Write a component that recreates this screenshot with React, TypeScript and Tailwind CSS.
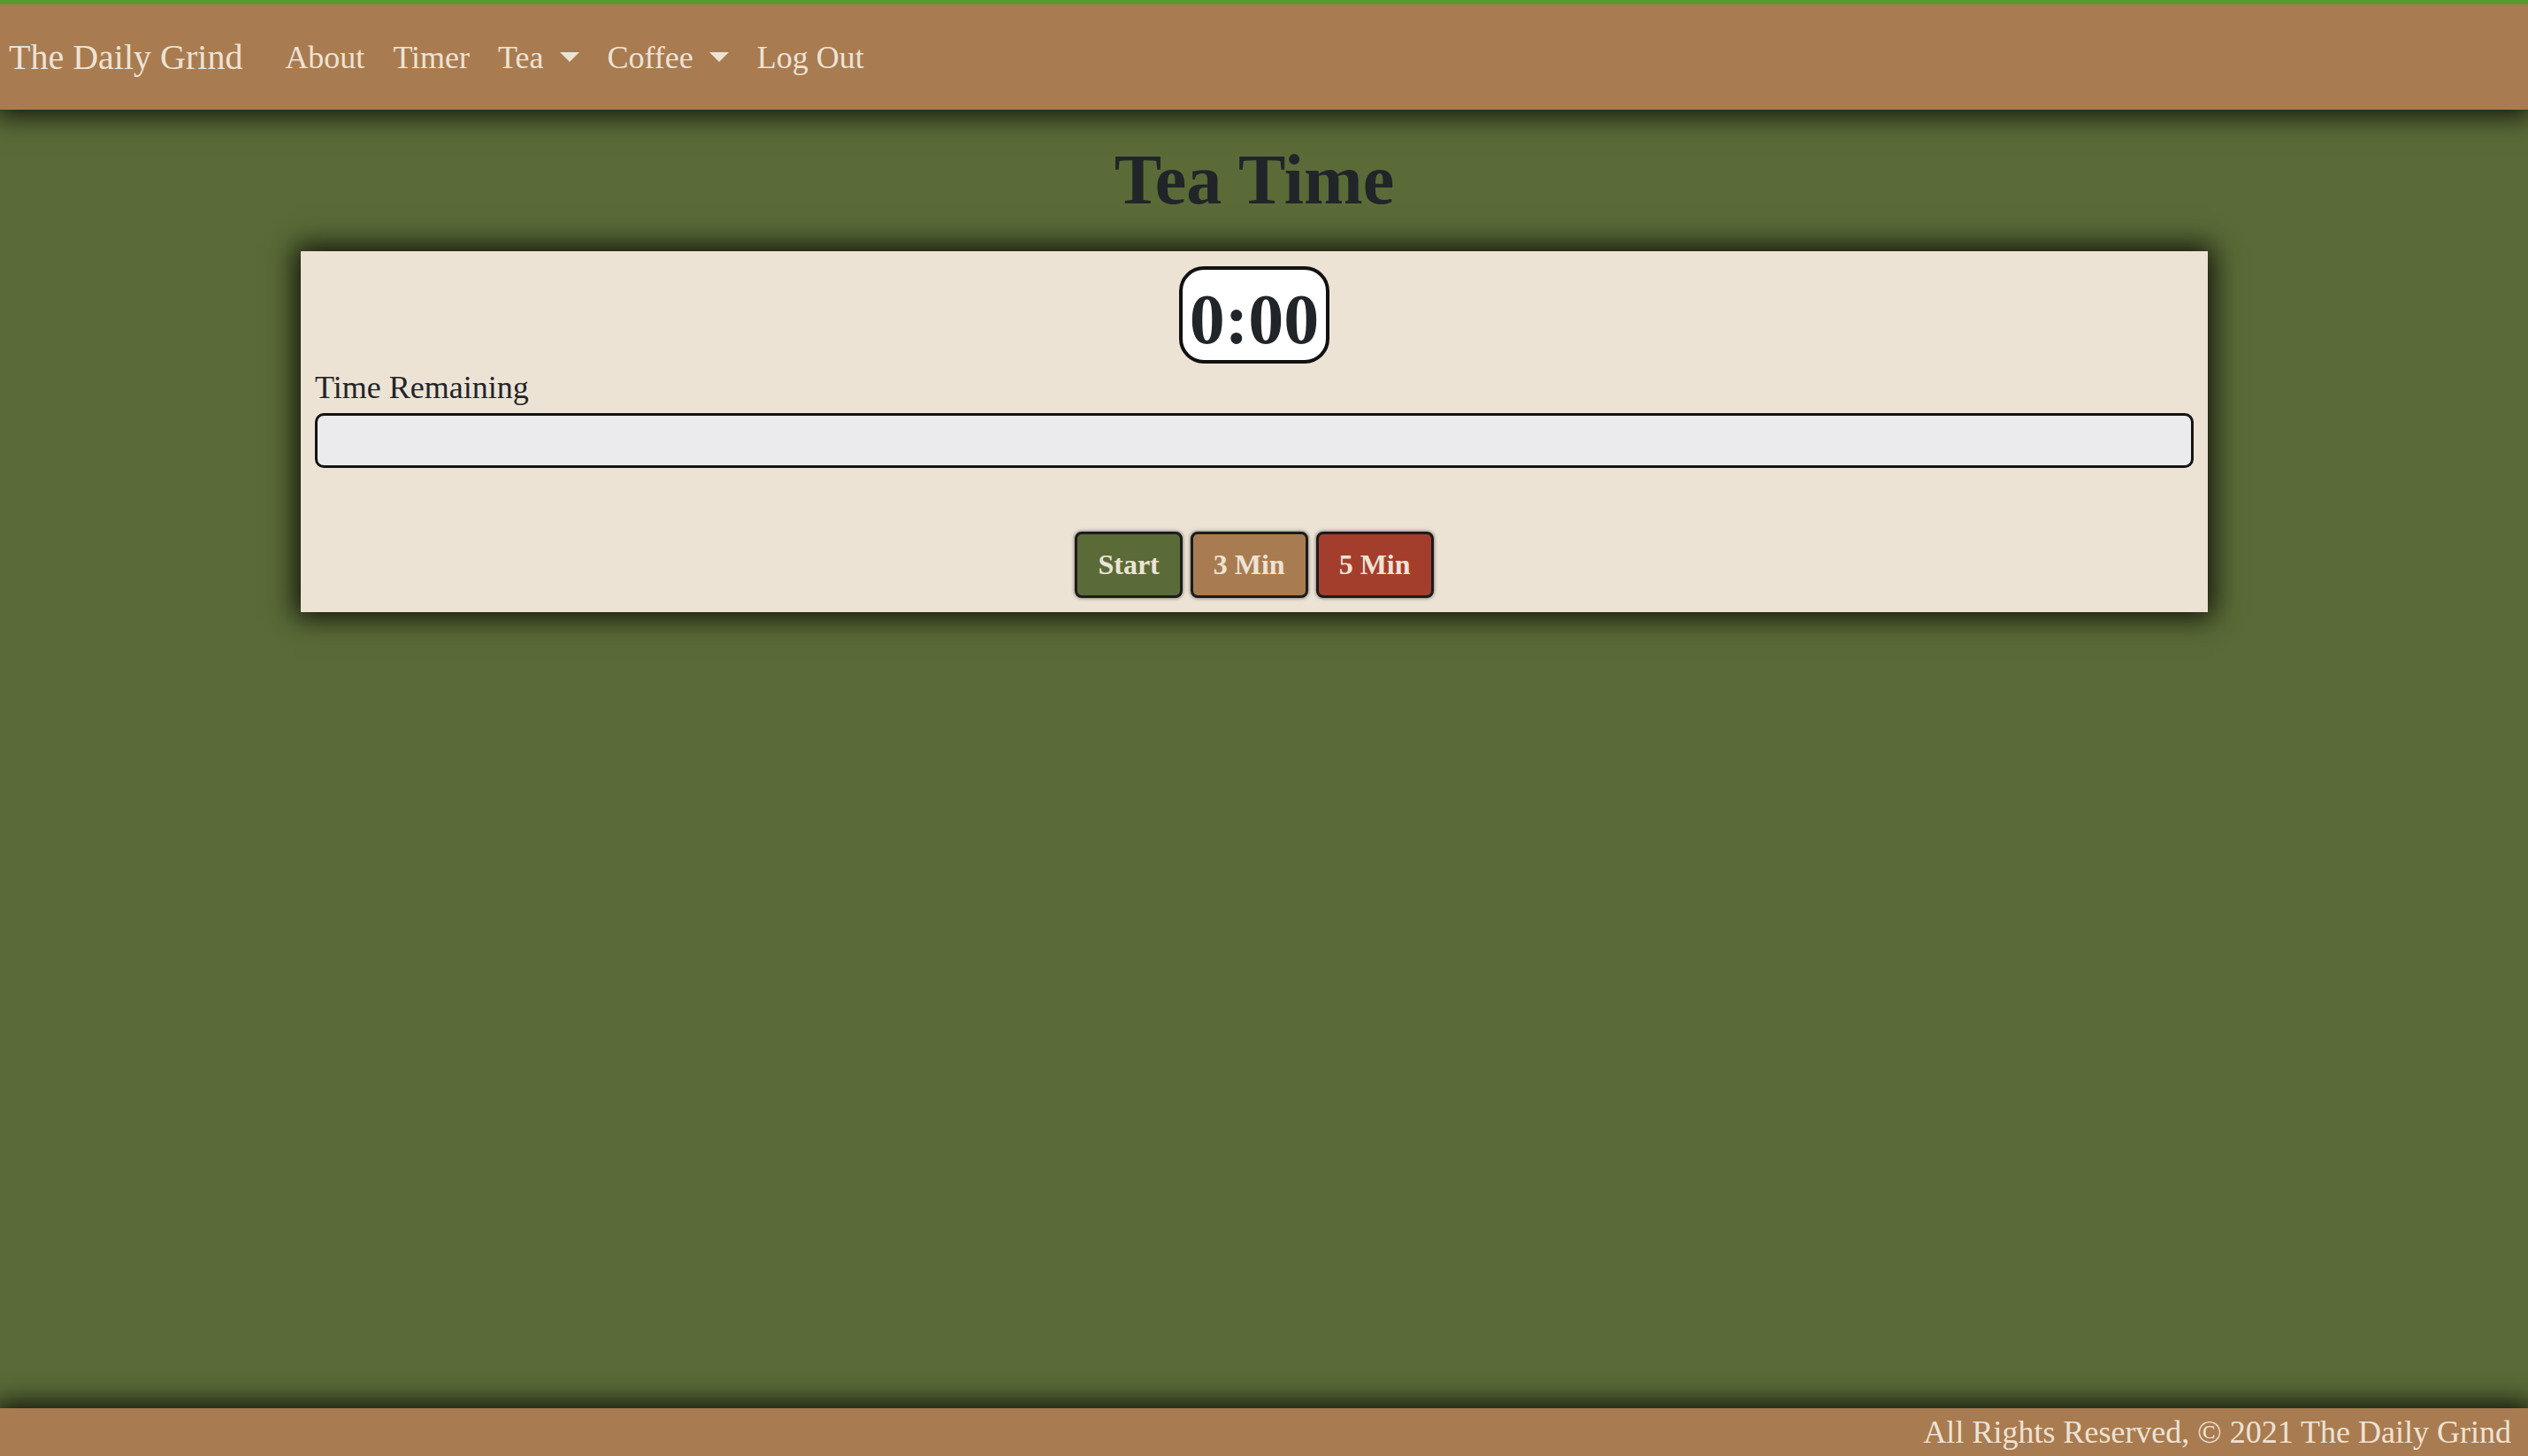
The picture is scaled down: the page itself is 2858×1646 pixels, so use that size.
import React from "react"

// Tea timer page: navbar, title, timer card, footer

const NAV_LINKS = [
  { label: "About", dropdown: false },
  { label: "Timer", dropdown: false },
  { label: "Tea", dropdown: true },
  { label: "Coffee", dropdown: true },
  { label: "Log Out", dropdown: false },
]

function Caret() {
  return (
    <span className="ml-[18px] inline-block h-0 w-0 border-x-[11px] border-t-[11px] border-x-transparent border-t-[#ede3d5]" />
  )
}

function Navbar() {
  return (
    <nav className="relative z-10 flex h-[124px] items-center border-t-[5px] border-[#559a2f] bg-[#a97b50] pl-[10px] text-[#ede3d5] shadow-[0_0_30px_6px_rgba(0,0,0,0.85)]">
      <span className="mr-[32px] text-[40px] leading-[60px]">The Daily Grind</span>
      <ul className="flex items-center">
        {NAV_LINKS.map((link) => (
          <li key={link.label} className="flex items-center px-[16px] text-[36px] leading-[54px]">
            <span>{link.label}</span>
            {link.dropdown && <Caret />}
          </li>
        ))}
      </ul>
    </nav>
  )
}

function TimerCard() {
  return (
    <div className="relative bg-[#ede3d5] px-[16px] pb-[16px] pt-[17px] shadow-[0_0_30px_6px_rgba(0,0,0,0.85)]">
      {/* Clock */}
      <div className="flex justify-center">
        <div className="h-[110px] w-[170px] overflow-hidden rounded-[28px] border-4 border-[#111111] bg-white pt-[9px] text-center text-[80px] font-bold leading-[94px] text-[#212529]">
          0:00
        </div>
      </div>

      {/* Progress */}
      <div className="text-[36px] leading-[54px] text-[#212529]">Time Remaining</div>
      <div className="mt-[2px] h-[62px] rounded-[10px] border-[3px] border-[#141414] bg-[#ebebee]" />

      {/* Controls */}
      <div className="mt-[72px] flex justify-center gap-[9px]">
        <button className="flex h-[75px] items-center rounded-[8px] border-[3px] border-[#1c1c1c] bg-[#5a6b37] px-[23px] pb-[2px] text-[32px] font-bold text-[#ede3d5] shadow-[0_0_4px_rgba(0,0,0,0.6)]">
          Start
        </button>
        <button className="flex h-[75px] items-center rounded-[8px] border-[3px] border-[#1c1c1c] bg-[#a97b50] px-[23px] pb-[2px] text-[32px] font-bold text-[#ede3d5] shadow-[0_0_4px_rgba(0,0,0,0.6)]">
          3 Min
        </button>
        <button className="flex h-[75px] items-center rounded-[8px] border-[3px] border-[#1c1c1c] bg-[#a33e2d] px-[23px] pb-[2px] text-[32px] font-bold text-[#ede3d5] shadow-[0_0_4px_rgba(0,0,0,0.6)]">
          5 Min
        </button>
      </div>
    </div>
  )
}

export default function App() {
  return (
    <div className="flex min-h-screen flex-col bg-[#5a6b37] font-['Liberation_Serif',serif]">
      <Navbar />

      <main className="ml-[340px] w-[2156px]">
        <h1 className="pb-[33px] pt-[31px] text-center text-[80px] font-bold leading-[96px] text-[#212529]">
          Tea Time
        </h1>
        <TimerCard />
      </main>

      <footer className="relative z-10 mt-auto h-[54px] bg-[#a97b50] pr-[19px] text-right text-[36px] leading-[54px] text-[#ede3d5] shadow-[0_0_30px_6px_rgba(0,0,0,0.85)]">
        All Rights Reserved, © 2021 The Daily Grind
      </footer>
    </div>
  )
}
